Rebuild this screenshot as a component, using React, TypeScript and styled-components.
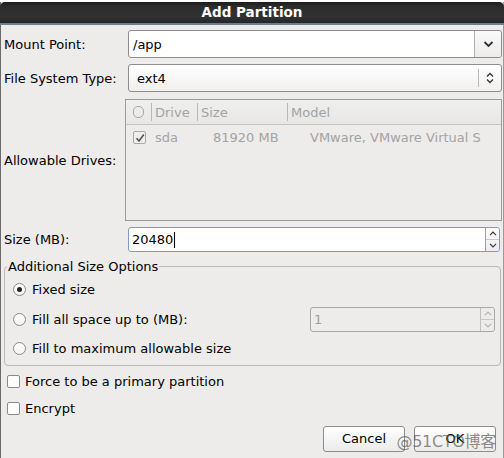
import React from "react";
import styled, { createGlobalStyle } from "styled-components";

const Global = createGlobalStyle`
  html, body { margin: 0; padding: 0; background: #ffffff; }
  body { font-family: "DejaVu Sans", "Noto Sans CJK SC", sans-serif; font-size: 13px; color: #000; }
  * { box-sizing: border-box; }
`;

const Page = styled.div`
  width: 504px;
  height: 458px;
  overflow: hidden;
  display: flex;
  flex-direction: column;
  background: #ffffff;
`;

const BehindStrip = styled.div`
  height: 2px;
  overflow: hidden;
  padding-left: 128px;
  flex: none;
`;

const BehindText = styled.div`
  font-size: 22px;
  font-weight: bold;
  line-height: 22px;
  margin-top: -19px;
  letter-spacing: 1px;
  white-space: nowrap;
`;

const Dialog = styled.div`
  flex: 1;
  display: flex;
  flex-direction: column;
  background: #edeceb;
  border-left: 1px solid #6a6a6a;
  border-right: 1px solid #9a9a9a;
  position: relative;
`;

const TitleBar = styled.div`
  height: 23px;
  margin: 0 -1px;
  border-radius: 5px 5px 0 0;
  background: linear-gradient(#1c1c1c 0%, #2c2c2c 20%, #323232 70%, #262626 100%);
  border-bottom: 2px solid #6b7d92;
  color: #fff;
  font-weight: bold;
  font-size: 13.5px;
  display: flex;
  align-items: center;
  justify-content: center;
  padding-bottom: 1px;
`;

const Form = styled.div`
  display: grid;
  grid-template-columns: 124px 1fr;
  align-items: center;
  padding: 5px 1px 0 3px;
  row-gap: 6px;
`;

const Label = styled.div`
  white-space: nowrap;
`;

const Combo = styled.div`
  height: 28px;
  border: 1px solid #8d8d8d;
  border-radius: 3px;
  display: flex;
  align-items: stretch;
  background: #fff;
`;

const ComboText = styled.div`
  flex: 1;
  display: flex;
  align-items: center;
  padding-left: 4px;
`;

const ComboButton = styled.div<{ $w: number }>`
  width: ${(p) => p.$w}px;
  border-left: 1px solid #b0b0b0;
  display: flex;
  align-items: center;
  justify-content: center;
  background: linear-gradient(#fafafa, #ececec);
  border-radius: 0 3px 3px 0;
`;

const SelectBox = styled.div`
  height: 28px;
  border: 1px solid #8d8d8d;
  border-radius: 3px;
  display: flex;
  align-items: center;
  background: linear-gradient(#ffffff, #f0f0f0);
  padding-left: 8px;
`;

const SelectText = styled.div`
  flex: 1;
`;

const SelectArrows = styled.div`
  width: 23px;
  height: 18px;
  border-left: 1px solid #b8b8b8;
  display: flex;
  align-items: center;
  justify-content: center;
`;

const TreeRow = styled.div`
  grid-column: 1 / span 2;
  display: grid;
  grid-template-columns: 121px 1fr;
  align-items: center;
  margin-top: 1px;
`;

const Tree = styled.div`
  height: 122px;
  border: 1px solid #9b9b9b;
  background: #edeceb;
  overflow: hidden;
  color: #a3a3a3;
`;

const TreeHeader = styled.div`
  display: grid;
  grid-template-columns: 25px 46px 90px 1fr;
  height: 25px;
  border-bottom: 1px solid #c4c4c4;
  background: linear-gradient(#efefee, #e8e7e6);
`;

const HeaderCell = styled.div<{ $sep?: boolean }>`
  display: flex;
  align-items: center;
  padding-left: 3px;
  border-left: ${(p) => (p.$sep ? "1px solid #b8b8b8" : "none")};
  margin: 3px 0;
  white-space: nowrap;
`;

const CheckHeaderCell = styled.div`
  display: flex;
  align-items: center;
  justify-content: center;
  margin: 3px 0;
`;

const HollowCircle = styled.div`
  width: 11px;
  height: 12px;
  border: 1px solid #a8a8a8;
  border-radius: 5px;
`;

const TreeDataRow = styled.div`
  display: grid;
  grid-template-columns: 25px 62px 97px 1fr;
  height: 25px;
  align-items: center;
  white-space: nowrap;
`;

const DataCell = styled.div<{ $pad?: number }>`
  padding-left: ${(p) => p.$pad ?? 0}px;
  overflow: hidden;
`;

const CheckBox = styled.div<{ $disabled?: boolean }>`
  width: 13px;
  height: 13px;
  border: 1px solid ${(p) => (p.$disabled ? "#a8a8a8" : "#8a8a8a")};
  border-radius: 2px;
  background: ${(p) => (p.$disabled ? "#eeeeee" : "#ffffff")};
  display: flex;
  align-items: center;
  justify-content: center;
  flex: none;
`;

const TreeCheckCell = styled.div`
  padding-left: 7px;
`;

const SpinEntry = styled.div<{ $disabled?: boolean }>`
  height: 25px;
  width: 100%;
  display: flex;
  align-items: stretch;
  border: 1px solid ${(p) => (p.$disabled ? "#a8a8a8" : "#7b9cc6")};
  border-radius: 3px;
  background: ${(p) => (p.$disabled ? "#edeceb" : "#ffffff")};
  color: ${(p) => (p.$disabled ? "#9e9e9e" : "#000")};
`;

const SpinText = styled.div`
  flex: 1;
  display: flex;
  align-items: center;
  padding-left: 3px;
  font-size: 13px;
`;

const Caret = styled.span`
  display: inline-block;
  width: 1px;
  height: 16px;
  background: #000;
  margin-left: 1px;
`;

const SpinButtons = styled.div<{ $disabled?: boolean }>`
  width: 14px;
  display: flex;
  flex-direction: column;
  border-left: 1px solid ${(p) => (p.$disabled ? "#c0c0c0" : "#a0a0a0")};
  background: ${(p) => (p.$disabled ? "#edeceb" : "linear-gradient(#fcfcfc, #ececec)")};
  border-radius: 0 3px 3px 0;
`;

const SpinHalf = styled.div<{ $top?: boolean }>`
  flex: 1;
  display: flex;
  align-items: center;
  justify-content: center;
  border-bottom: ${(p) => (p.$top ? "1px solid #c8c8c8" : "none")};
`;

const SizeField = styled.div`
  display: flex;
  margin-right: 2px;
`;

const Frame = styled.fieldset`
  margin: 7px 2px 0 3px;
  padding: 1px 0 1px 6px;
  border: 1px solid #b9b9b9;
  border-radius: 4px;
  min-width: 0;
`;

const Legend = styled.legend`
  padding: 0 1px;
  margin-left: -4px;
  line-height: 15px;
`;

const RadioRow = styled.div`
  display: flex;
  align-items: center;
  height: 29.5px;
  gap: 6px;
  padding-left: 2px;
`;

const Radio = styled.div`
  width: 13px;
  height: 13px;
  border-radius: 50%;
  border: 1px solid #8a8a8a;
  background: linear-gradient(#ffffff, #f2f2f2);
  display: flex;
  align-items: center;
  justify-content: center;
  flex: none;
`;

const RadioDot = styled.div`
  width: 5px;
  height: 5px;
  border-radius: 50%;
  background: #222;
`;

const RadioLabel = styled.div`
  flex: 1;
`;

const DisabledSpinWrap = styled.div`
  width: 185px;
  margin-right: 5px;
  display: flex;
`;

const CheckRow = styled.div`
  display: flex;
  align-items: center;
  gap: 5px;
  padding-left: 6px;
  height: 27px;
`;

const Checks = styled.div`
  margin-top: 2px;
  display: flex;
  flex-direction: column;
`;

const ButtonBar = styled.div`
  display: flex;
  justify-content: flex-end;
  gap: 9px;
  padding-right: 7px;
  margin-top: 4px;
  position: relative;
`;

const Button = styled.div`
  width: 82px;
  height: 26px;
  border: 1px solid #8d8d8d;
  border-radius: 3px;
  background: linear-gradient(#ffffff, #ebebeb);
  display: flex;
  align-items: center;
  justify-content: center;
  font-size: 13px;
`;

const Watermark = styled.div`
  position: absolute;
  right: 7px;
  top: 2px;
  font-family: "DejaVu Sans", "Noto Sans CJK SC", sans-serif;
  font-size: 16px;
  color: rgba(90, 90, 90, 0.7);
  white-space: nowrap;
  letter-spacing: -0.3px;
  pointer-events: none;
`;

const Tick = ({ color = "#222" }: { color?: string }) => (
  <svg width="10" height="10" viewBox="0 0 10 10">
    <path d="M1.5 5.2 L4 8 L8.8 1.5" fill="none" stroke={color} strokeWidth="1.6" />
  </svg>
);

const ChevronDown = () => (
  <svg width="11" height="8" viewBox="0 0 11 8">
    <path d="M1.5 2 L5.5 6 L9.5 2" fill="none" stroke="#333" strokeWidth="1.8" />
  </svg>
);

const UpDown = () => (
  <svg width="8" height="12" viewBox="0 0 8 12">
    <path d="M1 4.5 L4 1.5 L7 4.5 M1 7.5 L4 10.5 L7 7.5" fill="none" stroke="#333" strokeWidth="1.3" />
  </svg>
);

const SmallArrow = ({ up, color }: { up?: boolean; color: string }) => (
  <svg width="8" height="5" viewBox="0 0 8 5">
    <path d={up ? "M1 4.2 L4 1 L7 4.2" : "M1 0.8 L4 4 L7 0.8"} fill="none" stroke={color} strokeWidth="1.1" />
  </svg>
);

const Spin = ({ value, disabled, caret }: { value: string; disabled?: boolean; caret?: boolean }) => {
  const c = disabled ? "#b0b0b0" : "#333";
  return (
    <SpinEntry $disabled={disabled}>
      <SpinText>
        {value}
        {caret && <Caret />}
      </SpinText>
      <SpinButtons $disabled={disabled}>
        <SpinHalf $top>
          <SmallArrow up color={c} />
        </SpinHalf>
        <SpinHalf>
          <SmallArrow color={c} />
        </SpinHalf>
      </SpinButtons>
    </SpinEntry>
  );
};

export default function App() {
  return (
    <>
      <Global />
      <Page>
        <BehindStrip>
          <BehindText>Please Select A Device</BehindText>
        </BehindStrip>
        <Dialog>
          <TitleBar>Add Partition</TitleBar>
          <Form>
            <Label>Mount Point:</Label>
            <Combo>
              <ComboText>/app</ComboText>
              <ComboButton $w={27}>
                <ChevronDown />
              </ComboButton>
            </Combo>
            <Label>File System Type:</Label>
            <SelectBox>
              <SelectText>ext4</SelectText>
              <SelectArrows>
                <UpDown />
              </SelectArrows>
            </SelectBox>
            <TreeRow>
              <Label>Allowable Drives:</Label>
              <Tree>
                <TreeHeader>
                  <CheckHeaderCell>
                    <HollowCircle />
                  </CheckHeaderCell>
                  <HeaderCell $sep>Drive</HeaderCell>
                  <HeaderCell $sep>Size</HeaderCell>
                  <HeaderCell $sep>Model</HeaderCell>
                </TreeHeader>
                <TreeDataRow>
                  <TreeCheckCell>
                    <CheckBox $disabled>
                      <Tick color="#555" />
                    </CheckBox>
                  </TreeCheckCell>
                  <DataCell $pad={4}>sda</DataCell>
                  <DataCell>81920 MB</DataCell>
                  <DataCell>VMware, VMware Virtual S</DataCell>
                </TreeDataRow>
              </Tree>
            </TreeRow>
            <Label>Size (MB):</Label>
            <SizeField>
              <Spin value="20480" caret />
            </SizeField>
          </Form>
          <Frame>
            <Legend>Additional Size Options</Legend>
            <RadioRow>
              <Radio>
                <RadioDot />
              </Radio>
              <RadioLabel>Fixed size</RadioLabel>
            </RadioRow>
            <RadioRow>
              <Radio />
              <RadioLabel>Fill all space up to (MB):</RadioLabel>
              <DisabledSpinWrap>
                <Spin value="1" disabled />
              </DisabledSpinWrap>
            </RadioRow>
            <RadioRow>
              <Radio />
              <RadioLabel>Fill to maximum allowable size</RadioLabel>
            </RadioRow>
          </Frame>
          <Checks>
            <CheckRow>
              <CheckBox />
              <span>Force to be a primary partition</span>
            </CheckRow>
            <CheckRow>
              <CheckBox />
              <span>Encrypt</span>
            </CheckRow>
          </Checks>
          <ButtonBar>
            <Button>Cancel</Button>
            <Button>OK</Button>
            <Watermark>@51CTO博客</Watermark>
          </ButtonBar>
        </Dialog>
      </Page>
    </>
  );
}
